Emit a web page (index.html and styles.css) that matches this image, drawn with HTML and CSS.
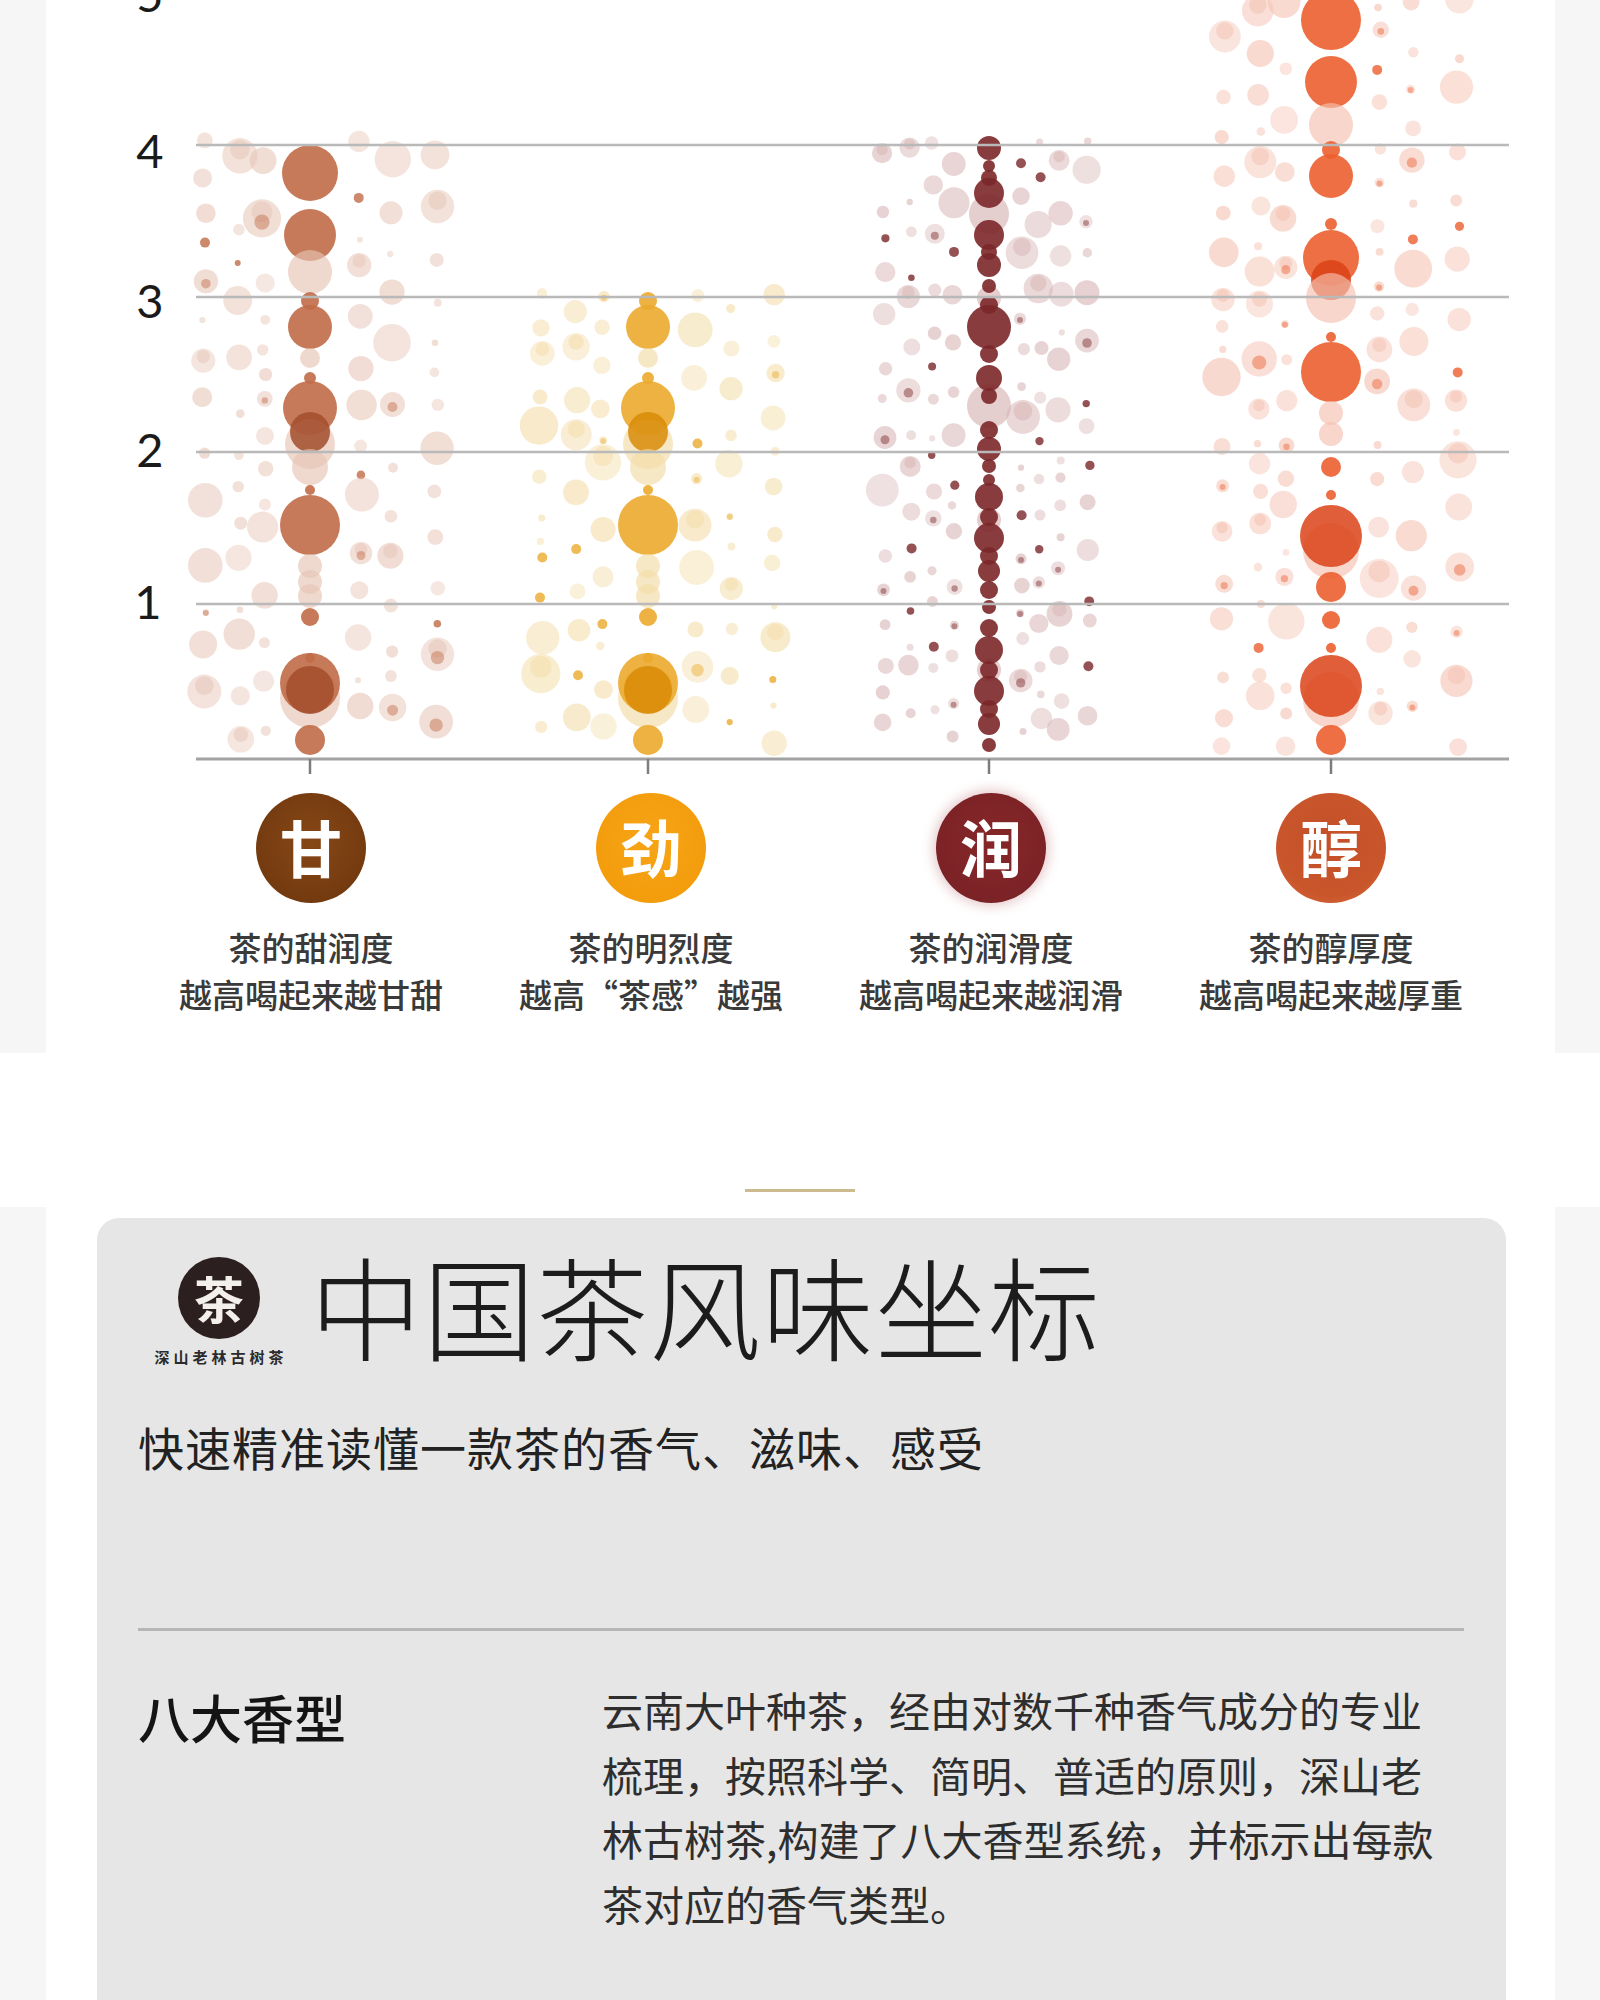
FILE: index.html
```html
<!DOCTYPE html>
<html lang="zh-CN">
<head>
<meta charset="utf-8">
<title>中国茶风味坐标</title>
<link rel="stylesheet" href="styles.css">
</head>
<body>
<div class="band band-top">
  <div class="band-inner">
    <svg class="chart" viewBox="46 0 1509 780" width="1509" height="780" xmlns="http://www.w3.org/2000/svg">
      <g id="bubbles"></g>
      <g class="grid">
        <line x1="196" y1="145" x2="1509" y2="145"/>
        <line x1="196" y1="297" x2="1509" y2="297"/>
        <line x1="196" y1="452" x2="1509" y2="452"/>
        <line x1="196" y1="604" x2="1509" y2="604"/>
        <line class="base" x1="196" y1="759" x2="1509" y2="759"/>
      </g>
      <g class="ticks">
        <line x1="310" y1="759" x2="310" y2="774"/>
        <line x1="648" y1="759" x2="648" y2="774"/>
        <line x1="989" y1="759" x2="989" y2="774"/>
        <line x1="1331" y1="759" x2="1331" y2="774"/>
      </g>
      <g class="ylabels">
        <text x="150" y="-6">5</text>
        <text x="150" y="150">4</text>
        <text x="150" y="300">3</text>
        <text x="150" y="449">2</text>
        <text x="148" y="601">1</text>
      </g>
    </svg>
    <div class="legend">
      <div class="legend-item">
        <div class="badge badge-gan">甘</div>
        <p class="caption">茶的甜润度<br>越高喝起来越甘甜</p>
      </div>
      <div class="legend-item">
        <div class="badge badge-jin">劲</div>
        <p class="caption">茶的明烈度<br>越高“茶感”越强</p>
      </div>
      <div class="legend-item">
        <div class="badge badge-run">润</div>
        <p class="caption">茶的润滑度<br>越高喝起来越润滑</p>
      </div>
      <div class="legend-item">
        <div class="badge badge-chun">醇</div>
        <p class="caption">茶的醇厚度<br>越高喝起来越厚重</p>
      </div>
    </div>
  </div>
</div>

<div class="gap">
  <span class="gold-rule"></span>
</div>

<div class="band band-bottom">
  <div class="band-inner">
    <section class="card">
      <div class="title-row">
        <div class="logo">
          <div class="logo-mark">茶</div>
          <div class="logo-text">深山老林古树茶</div>
        </div>
        <h1 class="title">中国茶风味坐标</h1>
      </div>
      <p class="subtitle">快速精准读懂一款茶的香气、滋味、感受</p>
      <hr class="rule">
      <div class="feature">
        <h2 class="feature-name">八大香型</h2>
        <p class="feature-text">云南大叶种茶，经由对数千种香气成分的专业梳理，按照科学、简明、普适的原则，深山老林古树茶,构建了八大香型系统，并标示出每款茶对应的香气类型。</p>
      </div>
    </section>
  </div>
</div>
<script src="script.js"></script>
</body>
</html>
```

FILE: styles.css
```css
* {
  box-sizing: border-box;
}

html, body {
  margin: 0;
  padding: 0;
  background: #ffffff;
}

body {
  width: 1600px;
  font-family: "Noto Sans CJK SC", "Noto Sans", sans-serif;
  color: #222;
  overflow-x: hidden;
}

.band {
  background: #f6f6f6;
  padding: 0 45px 0 46px;
}

.band-inner {
  background: #ffffff;
}

.band-top .band-inner {
  height: 1053px;
  overflow: hidden;
}

.chart {
  display: block;
}

.grid line {
  stroke: #b9b9b9;
  stroke-width: 2.5;
}

.grid line.base {
  stroke: #a2a2a2;
  stroke-width: 3;
}

.ticks line {
  stroke: #7c7c7c;
  stroke-width: 2.5;
}

.ylabels text {
  font-family: Lato, "Open Sans", sans-serif;
  font-weight: 400;
  font-size: 47px;
  fill: #1a1a1a;
  text-anchor: middle;
  dominant-baseline: central;
}

.legend {
  display: grid;
  grid-template-columns: repeat(4, 340px);
  padding-left: 95px;
  margin-top: 13px;
}

.legend-item {
  display: flex;
  flex-direction: column;
  align-items: center;
}

.badge {
  width: 110px;
  height: 110px;
  border-radius: 50%;
  display: flex;
  align-items: center;
  justify-content: center;
  color: #ffffff;
  font-size: 62px;
  font-weight: 700;
  line-height: 1;
  padding-bottom: 4px;
}

.badge-gan {
  background: radial-gradient(circle at 50% 45%, #864716 0%, #733a0f 75%, #6a340c 100%);
}

.badge-jin {
  background: radial-gradient(circle at 50% 45%, #f6a416 0%, #f39c0c 80%, #f0a43a 100%);
}

.badge-run {
  background: radial-gradient(circle at 50% 45%, #862729 0%, #7a2226 80%, #8e3236 100%);
  box-shadow: 0 0 12px 3px rgba(170, 60, 70, 0.28);
}

.badge-chun {
  background: radial-gradient(circle at 50% 45%, #c4502a 0%, #c9552b 65%, #e0733f 100%);
}

.caption {
  margin: 21px 0 0;
  font-size: 33px;
  line-height: 47px;
  font-weight: 500;
  color: #3a3a3a;
  text-align: center;
  white-space: nowrap;
}

.gap {
  height: 154px;
  padding-top: 136px;
  background: #ffffff;
}

.gold-rule {
  display: block;
  width: 110px;
  height: 3px;
  margin: 0 auto;
  background: #cbbb8e;
}

.band-bottom .band-inner {
  padding: 11px 49px 0 51px;
}

.card {
  background: #e6e6e6;
  border-radius: 22px 22px 0 0;
  min-height: 800px;
  padding: 30px 42px 0 41px;
}

.title-row {
  display: flex;
  align-items: flex-start;
}

.logo {
  width: 138px;
  margin: 9px 0 0 12px;
  display: flex;
  flex-direction: column;
  align-items: center;
}

.logo-mark {
  width: 82px;
  height: 82px;
  border-radius: 50%;
  background: #2b1f1f;
  color: #f3f0ec;
  display: flex;
  align-items: center;
  justify-content: center;
  font-family: "Noto Sans CJK TC", "Noto Sans CJK SC", serif;
  font-size: 50px;
  font-weight: 700;
  line-height: 1;
  padding-bottom: 3px;
}

.logo-text {
  margin-top: 9px;
  font-size: 15px;
  line-height: 18px;
  font-weight: 700;
  color: #2b2b2b;
  letter-spacing: 4px;
  margin-right: -4px;
  white-space: nowrap;
}

.title {
  margin: 0 0 0 22px;
  font-size: 112px;
  line-height: 112px;
  font-weight: 300;
  color: #1c1c1c;
  letter-spacing: 1px;
  white-space: nowrap;
}

.subtitle {
  margin: 50px 0 0;
  font-size: 46px;
  line-height: 60px;
  letter-spacing: 1px;
  color: #222;
  white-space: nowrap;
}

.rule {
  margin: 152px 0 0;
  border: 0;
  height: 3px;
  background: #b6b6b6;
}

.feature {
  display: flex;
  margin-top: 46px;
}

.feature-name {
  margin: 0;
  width: 464px;
  flex: none;
  font-size: 52px;
  line-height: 64.5px;
  font-weight: 500;
  color: #141414;
  padding-top: 8px;
}

.feature-text {
  margin: 0;
  width: 20.5em;
  font-size: 41px;
  line-height: 64.5px;
  color: #2e2e2e;
}
```

FILE: script.js
```javascript
(function () {
  var NS = "http://www.w3.org/2000/svg";
  var layer = document.getElementById("bubbles");

  function rng(seed) {
    return function () {
      seed |= 0; seed = seed + 0x6D2B79F5 | 0;
      var t = Math.imul(seed ^ seed >>> 15, 1 | seed);
      t = t + Math.imul(t ^ t >>> 7, 61 | t) ^ t;
      return ((t ^ t >>> 14) >>> 0) / 4294967296;
    };
  }

  function dot(x, y, r, fill, op) {
    var c = document.createElementNS(NS, "circle");
    c.setAttribute("cx", x.toFixed(1));
    c.setAttribute("cy", y.toFixed(1));
    c.setAttribute("r", r.toFixed(1));
    c.setAttribute("fill", fill);
    c.setAttribute("fill-opacity", op);
    layer.appendChild(c);
  }

  var lower = [
    [301, 9, "m"], [327, 22, "m"], [358, 10, "p"], [378, 6, "m"], [408, 27, "m"],
    [444, 25, "p"], [432, 20, "d"], [467, 18, "p"], [490, 5, "m"], [525, 30, "m"],
    [566, 12, "p"], [582, 12, "p"], [596, 12, "p"], [617, 9, "m"], [658, 5, "m"],
    [698, 30, "p"], [683, 30, "m"], [690, 24, "d"], [740, 15, "m"]
  ];

  var groups = [
    {
      cx: 310, main: "#c06b47", dark: "#a24c2b", pale: "#e6c4b5", top: 140, seed: 7,
      offs: [-106, -71, -46, 50, 82, 126], small: false,
      data: [[173, 28, "m"], [235, 26, "m"], [272, 22, "p"]].concat(lower)
    },
    {
      cx: 648, main: "#ebaa2c", dark: "#d88b06", pale: "#f3dca6", top: 292, seed: 19,
      offs: [-107, -71, -46, 48, 82, 126], small: false,
      data: lower
    },
    {
      cx: 989, main: "#7b2729", dark: "#6a1e20", pale: "#d7b3b4", top: 140, seed: 33,
      offs: [-105, -79, -56, -36, 33, 51, 71, 99], small: true,
      data: [
        [214, 20, "p"], [406, 22, "p"], [298, 12, "p"], [520, 12, "p"], [670, 12, "p"],
        [148, 12, "m"], [166, 6, "m"], [178, 8, "m"], [193, 15, "m"], [235, 15, "m"],
        [252, 8, "m"], [265, 12, "m"], [286, 7, "m"], [305, 9, "m"], [327, 22, "m"],
        [354, 9, "m"], [378, 13, "m"], [396, 8, "m"], [430, 9, "m"], [449, 12, "m"],
        [466, 7, "m"], [480, 6, "m"], [497, 14, "m"], [517, 9, "m"], [538, 15, "m"],
        [556, 9, "m"], [571, 11, "m"], [590, 9, "m"], [607, 7, "m"], [628, 9, "m"],
        [650, 14, "m"], [670, 9, "m"], [691, 15, "m"], [709, 9, "m"], [724, 11, "m"],
        [745, 7, "m"]
      ]
    },
    {
      cx: 1331, main: "#ec5f30", dark: "#da4216", pale: "#f4c0af", top: -10, seed: 51,
      offs: [-108, -72, -46, 48, 81, 127], small: false,
      data: [
        [20, 30, "m"], [82, 26, "m"], [125, 22, "p"], [150, 9, "m"], [176, 22, "m"],
        [224, 6, "m"], [258, 28, "m"], [280, 20, "d"], [298, 25, "p"], [337, 5, "m"],
        [372, 30, "m"], [413, 12, "p"], [434, 12, "p"], [467, 10, "m"], [495, 5, "m"],
        [551, 28, "p"], [536, 31, "d"], [587, 15, "m"], [620, 9, "m"], [648, 5, "m"],
        [700, 28, "p"], [686, 31, "d"], [740, 15, "m"]
      ]
    }
  ];

  groups.forEach(function (g) {
    var rand = rng(g.seed);

    g.offs.forEach(function (off) {
      var x = g.cx + off;
      var y = g.top + rand() * 24;
      while (y < 748) {
        var k = rand();
        var r;
        if (g.small) {
          r = k < 0.55 ? 3 + rand() * 4 : (k < 0.9 ? 7 + rand() * 5 : 12 + rand() * 5);
        } else {
          r = k < 0.5 ? 3 + rand() * 5 : (k < 0.85 ? 8 + rand() * 6 : 14 + rand() * 6);
        }
        if (y + r > 756) { r = Math.max(3, 756 - y); }
        var jx = x + (rand() - 0.5) * 4;
        var isDark = rand() < (g.small ? 0.3 : 0.14) && r < 8;
        if (isDark) {
          dot(jx, y, Math.min(r, 5), g.main, 0.8);
        } else {
          dot(jx, y, r, g.pale, 0.4 + rand() * 0.2);
          if (r > 10 && rand() < 0.3) {
            dot(jx, y - r * 0.35, r * 0.55, g.pale, 0.5);
          }
          if (rand() < 0.1) {
            dot(jx, y + r * 0.2, Math.max(3, r * 0.4), g.main, 0.45);
          }
        }
        y += r * (1.4 + rand() * 1.2) + 10 + rand() * 26;
      }
    });

    g.data.forEach(function (d) {
      var fill = d[2] === "m" ? g.main : (d[2] === "d" ? g.dark : g.pale);
      var op = d[2] === "p" ? 0.65 : (d[2] === "d" ? 0.85 : 0.9);
      dot(g.cx, d[0], d[1], fill, op);
    });
  });
})();
```
